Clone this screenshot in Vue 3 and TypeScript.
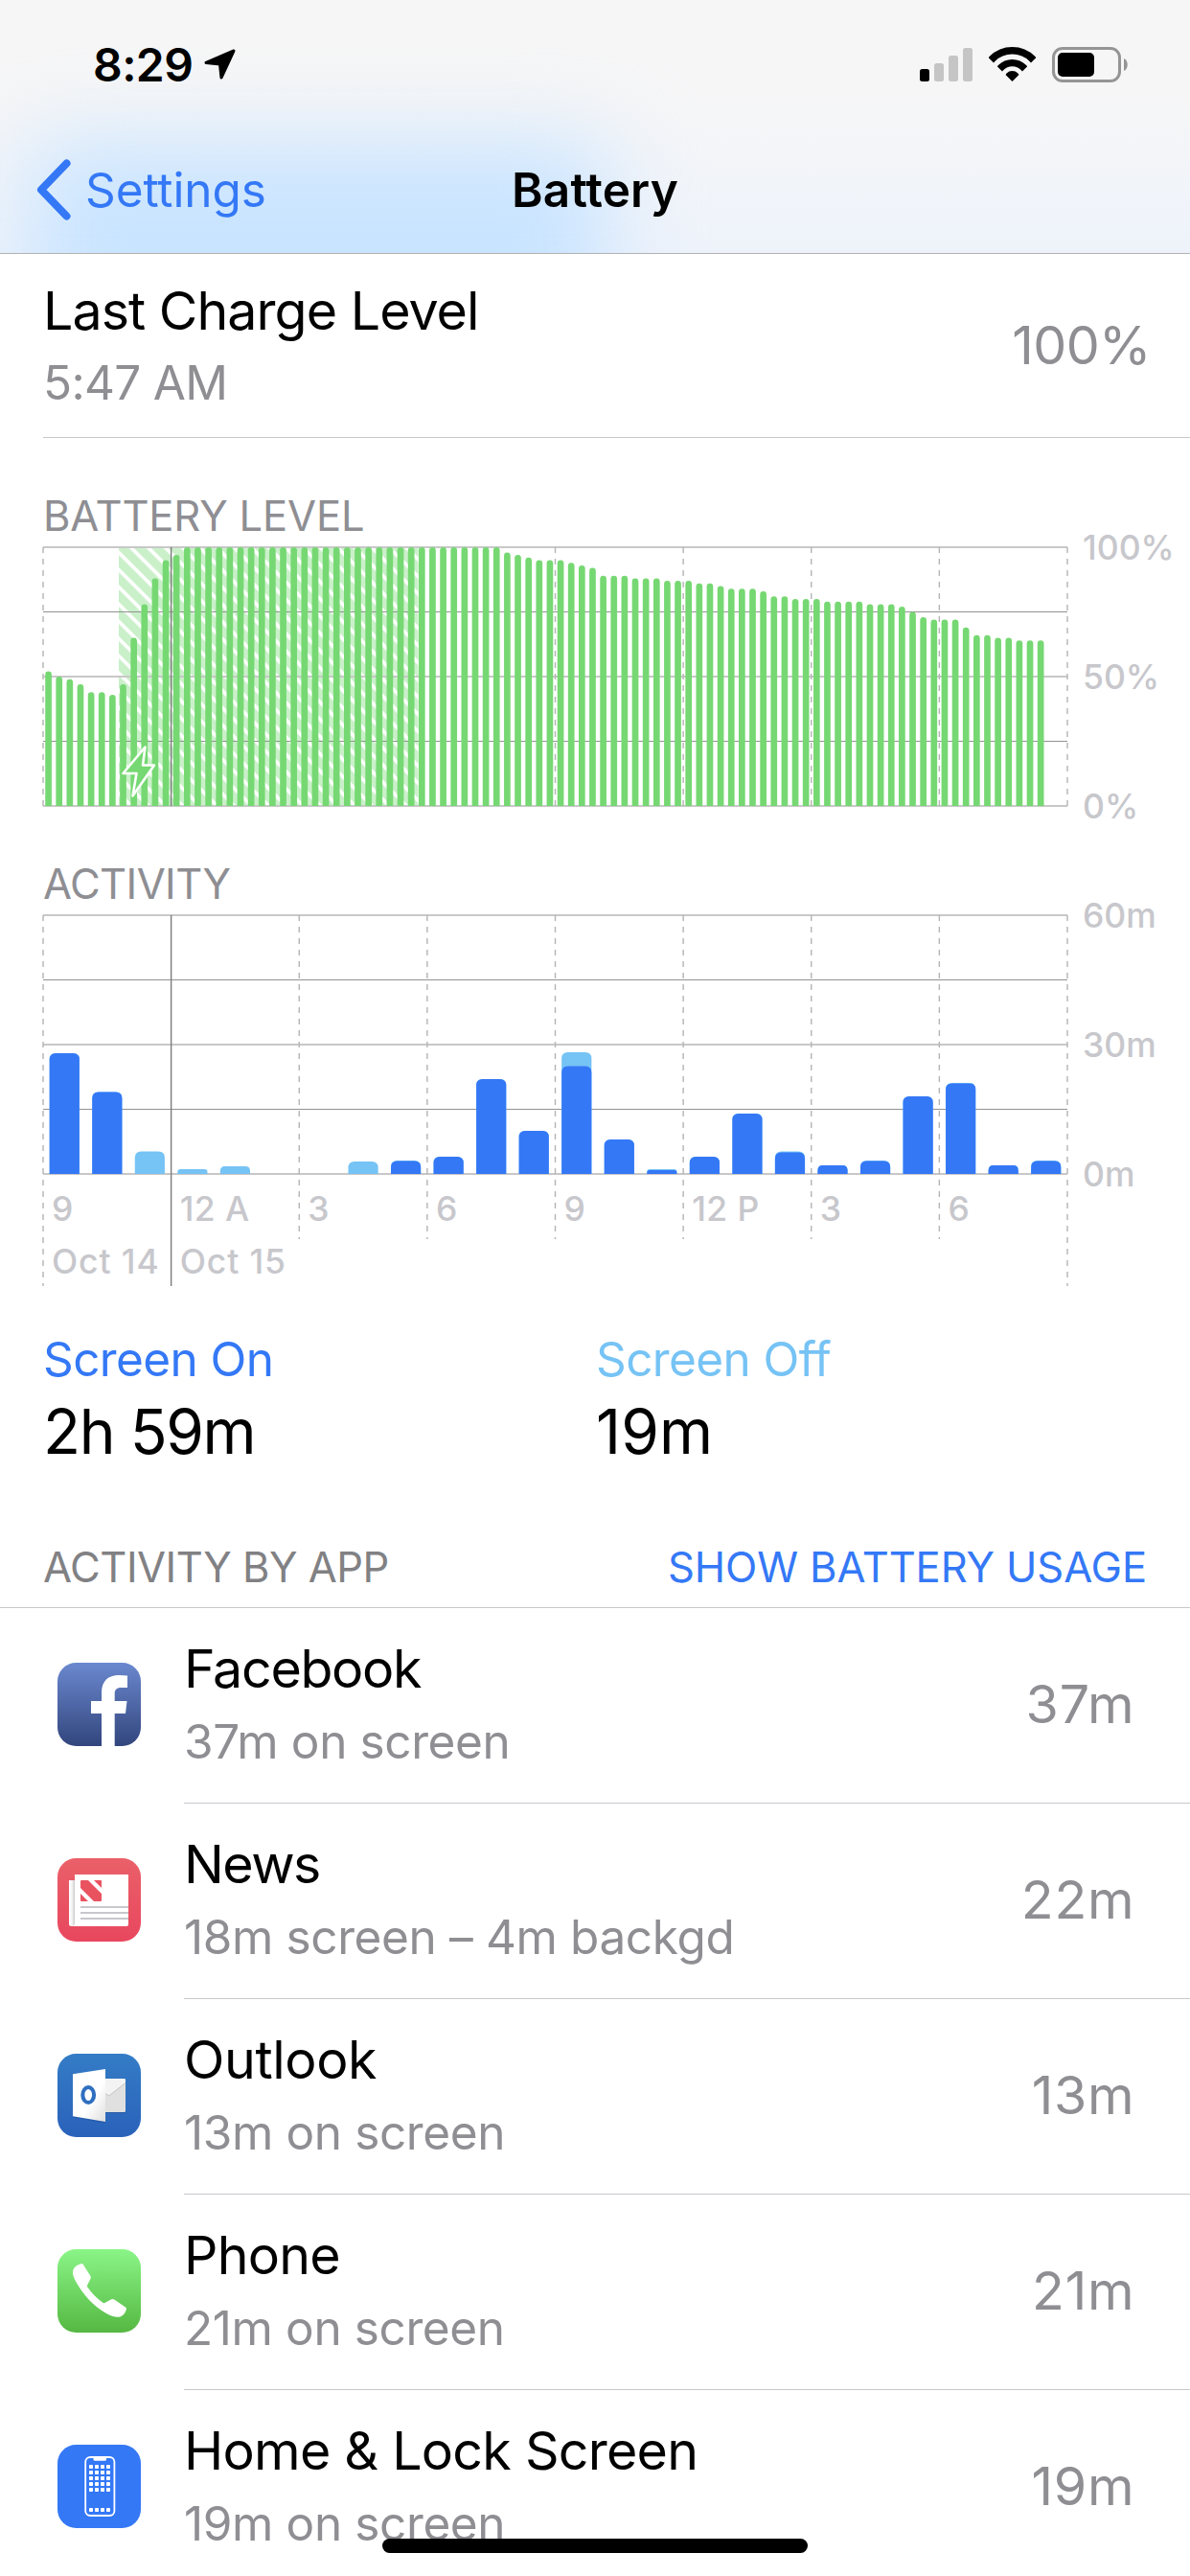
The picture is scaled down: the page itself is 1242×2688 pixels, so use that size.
<script setup lang="ts">
interface Usage {
  id: string
  name: string
  detail: string
  time: string
  tracking: number
}

interface HourActivity {
  on: number
  total: number
}

const PLOT_LEFT = 45
const PLOT_RIGHT = 1114
const PLOT_TOP = 6
const PLOT_HEIGHT = 270
const PLOT_BOTTOM = PLOT_TOP + PLOT_HEIGHT
const PLOT_WIDTH = PLOT_RIGHT - PLOT_LEFT

const levels: number[] = [
  52, 50, 49, 47, 44, 44, 43, 47, 65, 78, 88, 95, 97,
  ...Array<number>(30).fill(100),
  98, 97, 96, 95, 95, 95, 94, 93, 92, 89, 89, 89, 88, 88, 88, 87, 87, 87,
  86, 86, 85, 84, 84, 84, 83, 81, 81, 80, 80, 80, 79, 79, 79, 79, 78, 78,
  78, 77, 75, 73, 72, 72, 72, 69, 66, 66, 65, 65, 64, 64, 64,
]

const levelPitch = PLOT_WIDTH / 96
const levelWidth = levelPitch * 0.6

function levelPath(value: number, index: number): string {
  const x = PLOT_LEFT + index * levelPitch + levelPitch * 0.2
  const r = levelWidth / 2
  const y = PLOT_BOTTOM - (value / 100) * PLOT_HEIGHT
  return `M${x} ${PLOT_BOTTOM}V${y + r}a${r} ${r} 0 0 1 ${levelWidth} 0V${PLOT_BOTTOM}z`
}

const hours: HourActivity[] = [
  { on: 28, total: 28 }, { on: 19, total: 19 }, { on: 0, total: 5.2 },
  { on: 0, total: 1.1 }, { on: 0, total: 1.8 }, { on: 0, total: 0 },
  { on: 0, total: 0 }, { on: 0, total: 2.9 }, { on: 3, total: 3.1 },
  { on: 4, total: 4 }, { on: 22, total: 22 }, { on: 10, total: 10 },
  { on: 25, total: 28.2 }, { on: 8, total: 8 }, { on: 0.9, total: 1.1 },
  { on: 4, total: 4 }, { on: 14, total: 14 }, { on: 5, total: 5.2 },
  { on: 2, total: 2 }, { on: 3, total: 3.1 }, { on: 18, total: 18 },
  { on: 21, total: 21.1 }, { on: 2, total: 2 }, { on: 3, total: 3.1 },
]

const hourPitch = PLOT_WIDTH / 24
const hourWidth = hourPitch * 0.7

function hourPath(minutes: number, index: number): string {
  const x = PLOT_LEFT + index * hourPitch + hourPitch * 0.15
  const h = (minutes / 60) * PLOT_HEIGHT
  const r = Math.min(6.5, h * 0.6)
  return `M${x} ${PLOT_BOTTOM}v${-(h - r)}q0 ${-r} ${r} ${-r}h${hourWidth - 2 * r}q${r} 0 ${r} ${r}V${PLOT_BOTTOM}z`
}

const columns = [0, 1, 2, 3, 4, 5, 6, 7, 8].map((i) => PLOT_LEFT + (i * PLOT_WIDTH) / 8)
const rows = [0, 1, 2, 3, 4].map((i) => {
  const major = i % 2 === 0
  return { y: PLOT_TOP + (i * PLOT_HEIGHT) / 4, major }
})
const levelLabels = ['100%', '50%', '0%']
const minuteLabels = ['60m', '30m', '0m']
const hourLabels = ['9', '12 A', '3', '6', '9', '12 P', '3', '6']
const dotColumns = [33, 39, 45, 51]
const dotRows = [21, 27, 33, 39, 45, 66]

const apps: Usage[] = [
  { id: 'facebook', name: 'Facebook', detail: '37m on screen', time: '37m', tracking: -1.3 },
  { id: 'news', name: 'News', detail: '18m screen – 4m backgd', time: '22m', tracking: -1.5 },
  { id: 'outlook', name: 'Outlook', detail: '13m on screen', time: '13m', tracking: -0.4 },
  { id: 'phone', name: 'Phone', detail: '21m on screen', time: '21m', tracking: -0.8 },
  { id: 'home', name: 'Home & Lock Screen', detail: '19m on screen', time: '19m', tracking: -0.75 },
]
</script>

<template>
  <main class="screen">
    <header class="top">
      <div class="glow"></div>
      <div class="status">
        <span class="clock">8:29</span>
        <svg class="arrow" width="34" height="33" viewBox="0 0 34 33">
          <path d="M31 2 2 14.5 16.500 16 18 30z" stroke="#000" stroke-width="3" stroke-linejoin="round" />
        </svg>
        <svg class="signal" width="56" height="36" viewBox="0 0 56 36">
          <rect x="0" y="23" width="10" height="13" rx="2.500" />
          <rect x="15" y="17" width="10" height="19" rx="2.500" fill="#c5c5c5" />
          <rect x="30" y="9" width="10" height="27" rx="2.500" fill="#c5c5c5" />
          <rect x="45" y="1" width="10" height="35" rx="2.500" fill="#c5c5c5" />
        </svg>
        <svg class="wifi" width="49" height="36" viewBox="0 0 49 36">
          <defs><clipPath id="fan"><path d="M24.500 36-12-.5V-5H61v4.500z" /></clipPath></defs>
          <g clip-path="url(#fan)" fill="none" stroke="#000">
            <circle cx="24.500" cy="33.500" r="29.700" stroke-width="7.500" />
            <circle cx="24.500" cy="33.500" r="16.900" stroke-width="7.400" />
            <circle cx="24.500" cy="33.500" r="4.200" stroke-width="8.400" />
          </g>
        </svg>
        <svg class="cell" width="80" height="37" viewBox="0 0 80 37">
          <rect x="1.500" y="1.500" width="69" height="34" rx="9.500" fill="none" stroke="#959595" stroke-width="3" />
          <rect x="6" y="6" width="38" height="25" rx="5" />
          <path d="M75 12c5 2 5 11 0 13z" fill="#959595" />
        </svg>
      </div>
      <nav class="nav">
        <a class="back">
          <svg width="38" height="64" viewBox="0 0 38 64">
            <path d="M32.500 4.500 6 32l26.500 27.500" fill="none" stroke="#3478f6" stroke-width="8" stroke-linecap="round" stroke-linejoin="round" />
          </svg>
          <span>Settings</span>
        </a>
        <h1>Battery</h1>
      </nav>
    </header>

    <section class="charge">
      <div>
        <p class="title">Last Charge Level</p>
        <p class="sub">5:47 AM</p>
      </div>
      <span class="value">100%</span>
    </section>

    <h2 class="label level-label">BATTERY LEVEL</h2>
    <svg class="chart" width="1242" height="300" viewBox="0 0 1242 300">
      <defs>
        <pattern id="hatch" width="12.700" height="12.700" patternUnits="userSpaceOnUse" patternTransform="translate(124 9) rotate(45)">
          <rect width="12.700" height="12.700" fill="#caf0ca" />
          <rect width="12.700" height="3.700" fill="#fff" />
        </pattern>
      </defs>
      <rect x="124" :y="PLOT_TOP" width="312.500" :height="PLOT_HEIGHT" fill="url(#hatch)" />
      <g>
        <line
          v-for="row in rows" :key="row.y" :x1="PLOT_LEFT" :x2="PLOT_RIGHT"
          :y1="row.y" :y2="row.y" :class="row.major ? 'major' : 'minor'"
        />
        <line
          v-for="(x, i) in columns" :key="x" :x1="x" :x2="x" :y1="PLOT_TOP" :y2="PLOT_BOTTOM"
          :class="i === 1 ? 'midnight' : i > 1 && i < 4 ? 'hidden' : 'column'"
        />
      </g>
      <path v-for="(level, i) in levels" :key="i" :d="levelPath(level, i)" fill="#76d872" />
      <path
        d="M151.500 214.500 128.500 242h14l-4 23.500 22.500-32h-12z"
        fill="#76d872" stroke="#fff" stroke-width="2.600" stroke-linejoin="round"
      />
      <text v-for="(text, i) in levelLabels" :key="text" x="1130" :y="PLOT_TOP + 12.700 + i * 135" class="axis">{{ text }}</text>
    </svg>

    <h2 class="label activity-label">ACTIVITY</h2>
    <svg class="chart" width="1242" height="400" viewBox="0 0 1242 400">
      <line
        v-for="row in rows" :key="row.y" :x1="PLOT_LEFT" :x2="PLOT_RIGHT" :y1="row.y" :y2="row.y"
        :class="row.major ? 'major' : 'minor'"
      />
      <line
        v-for="(x, i) in columns" :key="x" :x1="x" :x2="x" :y1="PLOT_TOP"
        :y2="i < 2 || i === 8 ? 393 : 344" :class="i === 1 ? 'midnight' : 'column'"
      />
      <g v-for="(hour, i) in hours" :key="i">
        <path v-if="hour.total" :d="hourPath(hour.total, i)" fill="#76c3f5" />
        <path v-if="hour.on" :d="hourPath(hour.on, i)" fill="#3478f6" />
      </g>
      <text v-for="(text, i) in minuteLabels" :key="text" x="1130" :y="PLOT_TOP + 12.700 + i * 135" class="axis">{{ text }}</text>
      <text v-for="(text, i) in hourLabels" :key="i" :x="columns[i] + 9" y="325" class="axis hour">{{ text }}</text>
      <text :x="columns[0] + 9" y="380" class="axis date">Oct 14</text>
      <text :x="columns[1] + 9" y="380" class="axis date">Oct 15</text>
    </svg>

    <section class="totals">
      <div class="on">
        <p class="sub">Screen On</p>
        <p class="amount">2h 59m</p>
      </div>
      <div class="off">
        <p class="sub">Screen Off</p>
        <p class="amount">19m</p>
      </div>
    </section>

    <div class="list-head">
      <h2>ACTIVITY BY APP</h2>
      <a>SHOW BATTERY USAGE</a>
    </div>

    <ul class="apps">
      <li v-for="app in apps" :key="app.id">
        <svg class="icon" width="87" height="87" viewBox="0 0 87 87">
          <g v-if="app.id === 'facebook'">
            <linearGradient id="fb" x2="0" y2="1"><stop stop-color="#6b88cf" /><stop offset="1" stop-color="#32467d" /></linearGradient>
            <rect width="87" height="87" rx="19.500" fill="url(#fb)" />
            <path d="M46 87V53H35V40h11v-8.500C46 19 53 13 64 13q5 0 9 .6V26h-6.500c-5 0-6.800 2.500-6.800 6.500V40h12.800L71 53H59.700v34z" fill="#fff" />
          </g>
          <g v-else-if="app.id === 'news'">
            <linearGradient id="nw" x2="0" y2="1"><stop stop-color="#ea6069" /><stop offset="1" stop-color="#e8475e" /></linearGradient>
            <linearGradient id="fold"><stop stop-color="#fff" /><stop offset=".45" stop-color="#f4f4f4" /><stop offset="1" stop-color="#bdbdbd" /></linearGradient>
            <rect width="87" height="87" rx="19.500" fill="url(#nw)" />
            <path d="M12 23h7v48h-4.500q-2.500 0-2.500-2.500z" fill="url(#fold)" />
            <path d="M18 17h56v52q0 2-2 2H16q2-.5 2-3z" fill="#fff" />
            <path d="M25 23h7l14 14v7q0 1-1 1h-7L24 31v-7q0-1 1-1zM38 23h7q1 0 1 1v7zM24 37l8 8h-7q-1 0-1-1z" fill="#e9535f" />
            <path d="M24 50h50v2H24zM24 56h50v2H24zM24 62h50v2H24z" fill="#c7c7cc" />
          </g>
          <g v-else-if="app.id === 'outlook'">
            <linearGradient id="ol" x2="0" y2="1"><stop stop-color="#347cc6" /><stop offset="1" stop-color="#2a62ba" /></linearGradient>
            <linearGradient id="door" y2="1"><stop offset=".6" stop-color="#fff" /><stop offset="1" stop-color="#dedede" /></linearGradient>
            <rect width="87" height="87" rx="19.500" fill="url(#ol)" />
            <path d="M50 27h19.500q1.500 0 1.500 1.500v32q0 1.500-1.500 1.500H50z" fill="#1d4c93" opacity=".5" />
            <path d="M50 26h19.500q1.500 0 1.500 1.500v32q0 1.500-1.500 1.500H50z" fill="#e0e0e0" />
            <path d="M50 26h19.500q1.500 0 1.500 1.500v3L55 43q-1.500 1-3 0l-2-1.500z" fill="#f3f3f3" />
            <path d="M71 30.500 55 43q-1.500 1-3 0l-2-1.500" fill="none" stroke="#c4c4c4" stroke-width="1" />
            <path d="M16 22.500 50 17v55.500l-34-6z" fill="#1d4c93" opacity=".4" />
            <path d="M16 21.300 50 16v55l-34-5.700z" fill="url(#door)" />
            <ellipse cx="32.200" cy="43" rx="5.900" ry="7.900" fill="none" stroke="#2f6fc0" stroke-width="4" />
          </g>
          <g v-else-if="app.id === 'phone'">
            <linearGradient id="ph" x2="0" y2="1"><stop stop-color="#8af587" /><stop offset="1" stop-color="#55b842" /></linearGradient>
            <rect width="87" height="87" rx="19.500" fill="url(#ph)" />
            <path d="M24.500 15.200q1.500-.7 2.500 1l7.300 11.500q.9 1.500.2 3l-3.400 6.800q-.4 1 .2 2 6.500 9.500 16 16.300 1 .7 2 .2l7-3.700q1.500-.8 3 .1L71 60.400q1.400 1 .8 2.600-1.600 5.500-6.300 7.400c-4 1.300-9.500-.6-14.500-3.400C38 59.500 27 48 19 33.500c-3-5.500-4-10-2-13.300 1.500-2.700 4.500-4 7.500-5z" fill="#fff" />
          </g>
          <g v-else>
            <rect width="87" height="87" rx="19.500" fill="#3478f6" />
            <rect x="29.200" y="13" width="30.200" height="61" rx="5" fill="none" stroke="#fff" stroke-width="1.800" />
            <path d="M37.500 12.500h13.500v2.700q0 1.500-1.500 1.500H39q-1.500 0-1.500-1.500z" fill="#fff" />
            <template v-for="y in dotRows" :key="y">
              <rect v-for="x in dotColumns" :key="x" :x="x" :y="y" width="4" height="4" rx=".8" fill="#fff" />
            </template>
          </g>
        </svg>
        <div class="row">
          <div>
            <p class="title" :style="{ letterSpacing: app.tracking + 'px' }">{{ app.name }}</p>
            <p class="sub">{{ app.detail }}</p>
          </div>
          <span class="value">{{ app.time }}</span>
        </div>
      </li>
    </ul>
    <div class="home-bar"></div>
  </main>
</template>

<style>
body {
  margin: 0;
  background: #fff;
}
</style>

<style scoped>
.screen {
  position: relative;
  width: 1242px;
  height: 2688px;
  overflow: hidden;
  background: #fff;
  color: #000;
  font-family: Inter, "Liberation Sans", sans-serif;
}
p, h1, h2, ul {
  margin: 0;
  padding: 0;
  font-weight: 400;
}
.top {
  position: relative;
  height: 264px;
  border-bottom: 1px solid #b2b2b2;
  overflow: hidden;
  background: linear-gradient(#f6f6f6 0, #f6f6f7 100px, #eef3fb 264px);
}
.glow {
  position: absolute;
  left: 32px;
  top: 150px;
  width: 600px;
  height: 300px;
  background: #c9e4ff;
  filter: blur(46px);
}
.status {
  position: relative;
  display: flex;
  align-items: flex-start;
  height: 132px;
}
.clock {
  margin: 38px 0 0 97px;
  width: 116px;
  font-size: 48px;
  line-height: 60px;
  font-weight: 600;
  letter-spacing: -0.6px;
}
.arrow { margin-top: 51px; }
.signal { margin: 49px 0 0 713px; }
.wifi { margin: 49px 0 0 16px; }
.cell { margin: 49px 0 0 17px; }
.nav {
  position: relative;
  display: grid;
  grid-template-columns: 1fr auto 1fr;
  align-items: center;
  height: 132px;
  font-size: 49.5px;
  line-height: 60px;
}
.back {
  display: flex;
  align-items: center;
  gap: 14px;
  padding-left: 37px;
  color: #3478f6;
  letter-spacing: -0.1px;
}
.nav h1 {
  font-size: 49.5px;
  font-weight: 600;
  letter-spacing: 0.15px;
}
.charge {
  display: flex;
  justify-content: space-between;
  align-items: center;
  box-sizing: border-box;
  height: 192px;
  margin-left: 45px;
  padding: 0 41px 2px 0;
  border-bottom: 1px solid #c8c7cc;
}
.title {
  font-size: 55.5px;
  line-height: 68px;
  letter-spacing: -0.95px;
}
.sub {
  margin-top: 11px;
  font-size: 49.5px;
  line-height: 60px;
  letter-spacing: -0.7px;
  color: #8e8e93;
}
.value {
  font-size: 55.5px;
  line-height: 68px;
  letter-spacing: -0.6px;
  color: #8e8e93;
}
.label {
  margin-left: 45px;
  font-size: 43.5px;
  line-height: 54px;
  color: #8e8e93;
}
.level-label {
  margin-top: 54px;
  letter-spacing: -0.15px;
}
.activity-label {
  margin-top: 30px;
  letter-spacing: -0.6px;
}
.chart {
  display: block;
  overflow: visible;
}
.major { stroke: #c8c8c8; stroke-width: 2; }
.minor { stroke: #929292; stroke-width: 1; }
.column { stroke: #b4b4b4; stroke-width: 1.4; stroke-dasharray: 6 6; }
.midnight { stroke: #7c7c7c; stroke-width: 1.4; }
.hidden { stroke: none; }
.axis {
  font-size: 35.5px;
  font-weight: 500;
  fill: #c7c7cc;
}
.hour { letter-spacing: 0.4px; }
.date { letter-spacing: 0.9px; }
.totals {
  display: grid;
  grid-template-columns: 577px 1fr;
  margin: 39px 0 0 45px;
}
.totals .sub {
  margin: 0;
  letter-spacing: -0.6px;
}
.on .sub { color: #3478f6; }
.off .sub { color: #76c3f5; }
.amount {
  margin-top: 7px;
  font-size: 64px;
  line-height: 78px;
  letter-spacing: -1.4px;
}
.off .amount { letter-spacing: 0.2px; }
.list-head {
  display: flex;
  justify-content: space-between;
  margin-top: 75px;
  padding: 0 45px 15px;
  border-bottom: 1px solid #c8c7cc;
  font-size: 43.5px;
  line-height: 54px;
}
.list-head h2 {
  font-size: 43.5px;
  letter-spacing: -0.5px;
  color: #818184;
}
.list-head a {
  letter-spacing: -0.1px;
  color: #3478f6;
}
.apps { list-style: none; }
.apps li {
  display: flex;
  height: 204px;
}
.icon {
  margin: 57px 45px 0 60px;
  flex: none;
}
.row {
  flex: 1;
  display: flex;
  justify-content: space-between;
  align-items: center;
  box-sizing: border-box;
  padding: 0 57.5px 5px 0;
  border-bottom: 1px solid #c8c7cc;
}
.row .sub {
  margin-top: 12px;
  letter-spacing: -0.38px;
}
.row .value {
  margin-top: 2px;
  letter-spacing: 0.8px;
}
.home-bar {
  position: absolute;
  left: 399px;
  bottom: 24px;
  width: 444px;
  height: 15px;
  border-radius: 8px;
  background: #000;
}
</style>
